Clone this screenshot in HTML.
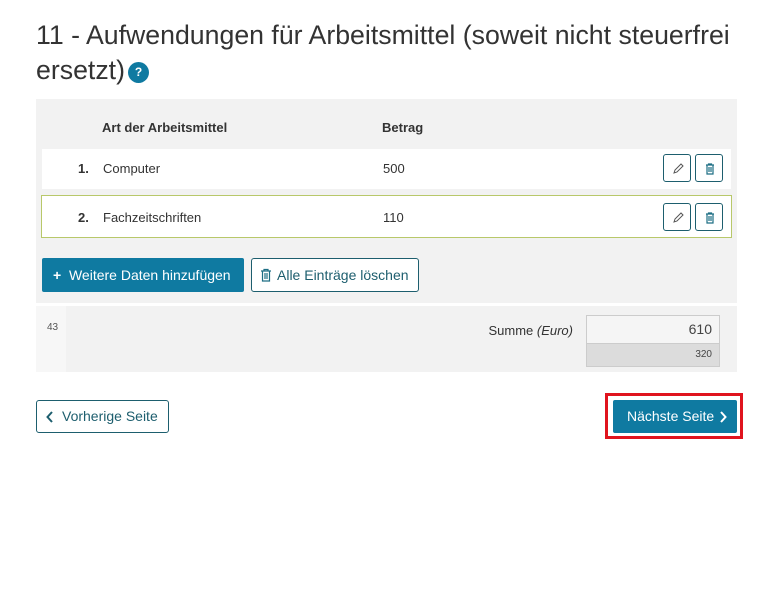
<!DOCTYPE html>
<html><head><meta charset="utf-8"><style>
*{margin:0;padding:0;box-sizing:border-box}
body{width:780px;height:616px;background:#fff;font-family:"Liberation Sans",sans-serif;color:#333;position:relative;overflow:hidden}
.a{position:absolute}
.t{font-size:26.7px;color:#333;white-space:nowrap}
.q{width:21px;height:21px;border-radius:50%;background:#0f7aa1;color:#fff;font-size:12px;font-weight:bold;text-align:center;line-height:21px}
.s{font-size:13px;color:#333}
.ib{width:28px;height:28px;border:1px solid #1d5e6e;border-radius:3px;background:#fff}
.ib svg{position:absolute;left:7px;top:7px}
</style></head><body>
<div class="a t" style="left:36px;top:20px">11 - Aufwendungen für Arbeitsmittel (soweit nicht steuerfrei</div>
<div class="a t" style="left:36px;top:55px">ersetzt)</div>
<div class="a q" style="left:128px;top:62px">?</div>

<div class="a" style="left:36px;top:99px;width:701px;height:204px;background:#f2f2f2"></div>
<div class="a s" style="left:102px;top:120px;font-weight:bold">Art der Arbeitsmittel</div>
<div class="a s" style="left:382px;top:120px;font-weight:bold">Betrag</div>

<div class="a" style="left:42px;top:149px;width:689px;height:40px;background:#fff"></div>
<div class="a s" style="left:78px;top:161px;font-weight:bold">1.</div>
<div class="a s" style="left:103px;top:161px">Computer</div>
<div class="a s" style="left:383px;top:161px">500</div>

<div class="a" style="left:41px;top:195px;width:691px;height:43px;background:#fff;border:1px solid #b8c86a"></div>
<div class="a s" style="left:78px;top:210px;font-weight:bold">2.</div>
<div class="a s" style="left:103px;top:210px">Fachzeitschriften</div>
<div class="a s" style="left:383px;top:210px">110</div>

<div class="a ib" style="left:663px;top:154px"><svg width="14" height="14" viewBox="0 0 14 14" fill="none" stroke="#555" stroke-width="1"><path d="M3 11l1-3 6-6 2 2-6 6z"/></svg></div>
<div class="a ib" style="left:695px;top:154px"><svg width="14" height="14" viewBox="0 0 14 14" fill="none" stroke="#1d6e84" stroke-width="1.2"><path d="M3 3h8M5.5 3V2h3v1M4 3v9h6V3M6 5v5M8 5v5"/></svg></div>
<div class="a ib" style="left:663px;top:203px"><svg width="14" height="14" viewBox="0 0 14 14" fill="none" stroke="#555" stroke-width="1"><path d="M3 11l1-3 6-6 2 2-6 6z"/></svg></div>
<div class="a ib" style="left:695px;top:203px"><svg width="14" height="14" viewBox="0 0 14 14" fill="none" stroke="#1d6e84" stroke-width="1.2"><path d="M3 3h8M5.5 3V2h3v1M4 3v9h6V3M6 5v5M8 5v5"/></svg></div>

<div class="a" style="left:42px;top:258px;width:202px;height:34px;background:#0f7aa1;border-radius:2px;color:#fff;font-size:14px;line-height:34px;padding-left:11px"><b>+</b>&nbsp; Weitere Daten hinzufügen</div>
<div class="a" style="left:251px;top:258px;width:168px;height:34px;background:#fff;border:1px solid #1d5e6e;border-radius:3px;color:#1d5e6e;font-size:14px;line-height:32px;padding-left:25px">Alle Einträge löschen
<svg class="a" style="left:8px;top:9px" width="12" height="14" viewBox="0 0 12 14" fill="none" stroke="#1d6e84" stroke-width="1.2"><path d="M1 3h10M4 3V1.5h4V3M2.5 3v10h7V3M5 5v6M7 5v6"/></svg></div>

<div class="a" style="left:36px;top:306px;width:701px;height:66px;background:#f2f2f2"></div>
<div class="a" style="left:36px;top:306px;width:30px;height:66px;background:#f7f7f7"></div>
<div class="a" style="left:47px;top:322px;font-size:10px;color:#555">43</div>
<div class="a s" style="left:400px;width:173px;text-align:right;top:323px">Summe <i>(Euro)</i></div>
<div class="a" style="left:586px;top:315px;width:134px;height:52px;border:1px solid #ccc;background:#f5f5f5"></div>
<div class="a" style="left:587px;top:343px;width:132px;height:23px;background:#dcdcdc;border-top:1px solid #ccc"></div>
<div class="a" style="left:600px;top:321px;width:112px;text-align:right;font-size:14px;color:#444">610</div>
<div class="a" style="left:600px;top:349px;width:112px;text-align:right;font-size:10px;color:#444">320</div>

<div class="a" style="left:36px;top:400px;width:133px;height:33px;border:1px solid #1d5e6e;border-radius:3px;color:#1d5e6e;font-size:14px;line-height:31px;padding-left:25px">Vorherige Seite
<svg class="a" style="left:9px;top:10px" width="8" height="12" viewBox="0 0 8 12" fill="none" stroke="#1d5e6e" stroke-width="2"><path d="M6 1L1.5 6 6 11"/></svg></div>

<div class="a" style="left:605px;top:393px;width:138px;height:46px;border:3px solid #e0141e"></div>
<div class="a" style="left:613px;top:400px;width:124px;height:33px;background:#0f7aa1;border-radius:2px;color:#fff;font-size:14px;line-height:33px;padding-left:14px">Nächste Seite
<svg class="a" style="left:106px;top:11px" width="8" height="12" viewBox="0 0 8 12" fill="none" stroke="#fff" stroke-width="2"><path d="M2 1l4.5 5L2 11"/></svg></div>
</body></html>
